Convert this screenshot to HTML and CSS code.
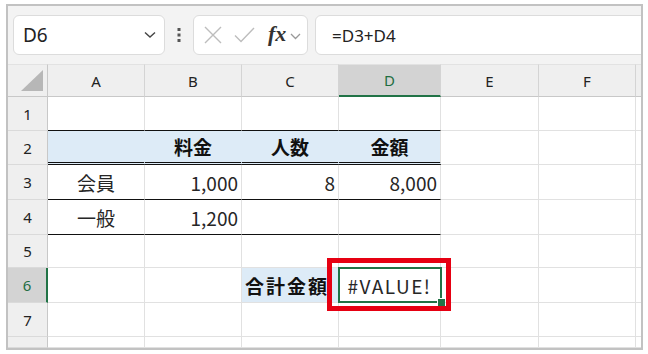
FILE: index.html
```html
<!DOCTYPE html>
<html lang="ja">
<head>
<meta charset="UTF-8">
<meta name="viewport" content="width=device-width, initial-scale=1.0">
<title>#VALUE! エラー</title>
<link rel="stylesheet" href="styles.css">
</head>
<body>
<div class="frame">
    <div class="toolbar">
        <div class="namebox">
            <span>D6</span>
            <svg width="12" height="8" viewBox="0 0 12 8"><path d="M1 1.5 L6 6 L11 1.5" fill="none" stroke="#444" stroke-width="1.4"/></svg>
        </div>
        <div class="dots">
            <svg width="4" height="14" viewBox="0 0 4 14"><rect x="0.5" y="0" width="3" height="3" fill="#555"/><rect x="0.5" y="5.5" width="3" height="3" fill="#555"/><rect x="0.5" y="11" width="3" height="3" fill="#555"/></svg>
        </div>
        <div class="fbuttons">
            <svg class="ic-x" width="18" height="18" viewBox="0 0 18 18"><path d="M1 1 L17 17 M17 1 L1 17" stroke="#bdbdbd" stroke-width="1.4"/></svg>
            <svg class="ic-ok" width="21" height="16" viewBox="0 0 21 16"><path d="M1 8.5 L7 14.5 L20 1" fill="none" stroke="#bdbdbd" stroke-width="1.4"/></svg>
            <span class="fx">fx</span>
            <svg class="ic-more" width="11" height="7" viewBox="0 0 11 7"><path d="M1 1 L5.5 5.5 L10 1" fill="none" stroke="#999" stroke-width="1.3"/></svg>
        </div>
        <div class="formula">=D3+D4</div>
    </div>

    <div class="sheet">
        <!-- column headers -->
        <div class="corner"><svg width="22" height="21" viewBox="0 0 22 21"><polygon points="22,0 22,21 0,21" fill="#b7b7b7"/></svg></div>
        <div class="colhead">A</div>
        <div class="colhead">B</div>
        <div class="colhead">C</div>
        <div class="colhead sel">D</div>
        <div class="colhead">E</div>
        <div class="colhead">F</div>
        <div class="colhead pad"></div>

        <!-- row 1 -->
        <div class="rowhead">1</div>
        <div class="cell under"></div>
        <div class="cell under"></div>
        <div class="cell under"></div>
        <div class="cell under"></div>
        <div class="cell"></div>
        <div class="cell"></div>
        <div class="cell pad"></div>

        <!-- row 2 -->
        <div class="rowhead">2</div>
        <div class="cell head-fill"></div>
        <div class="cell head-fill bold center">料金</div>
        <div class="cell head-fill bold center">人数</div>
        <div class="cell head-fill last bold center">金額</div>
        <div class="cell"></div>
        <div class="cell"></div>
        <div class="cell pad"></div>

        <!-- row 3 -->
        <div class="rowhead">3</div>
        <div class="cell under center">会員</div>
        <div class="cell under right">1,000</div>
        <div class="cell under right">8</div>
        <div class="cell under right">8,000</div>
        <div class="cell"></div>
        <div class="cell"></div>
        <div class="cell pad"></div>

        <!-- row 4 -->
        <div class="rowhead">4</div>
        <div class="cell under center">一般</div>
        <div class="cell under right">1,200</div>
        <div class="cell under"></div>
        <div class="cell under"></div>
        <div class="cell"></div>
        <div class="cell"></div>
        <div class="cell pad"></div>

        <!-- row 5 -->
        <div class="rowhead">5</div>
        <div class="cell"></div>
        <div class="cell"></div>
        <div class="cell"></div>
        <div class="cell"></div>
        <div class="cell"></div>
        <div class="cell"></div>
        <div class="cell pad"></div>

        <!-- row 6 -->
        <div class="rowhead sel">6</div>
        <div class="cell"></div>
        <div class="cell"></div>
        <div class="cell total bold">合計金額</div>
        <div class="cell active center">
            <span class="error">#VALUE!</span>
            <div class="selection"><div class="handle"></div></div>
            <div class="mark"></div>
        </div>
        <div class="cell"></div>
        <div class="cell"></div>
        <div class="cell pad"></div>

        <!-- row 7 -->
        <div class="rowhead">7</div>
        <div class="cell"></div>
        <div class="cell"></div>
        <div class="cell"></div>
        <div class="cell"></div>
        <div class="cell"></div>
        <div class="cell"></div>
        <div class="cell pad"></div>

        <!-- row 8 (cut off) -->
        <div class="rowhead"></div>
        <div class="cell"></div>
        <div class="cell"></div>
        <div class="cell"></div>
        <div class="cell"></div>
        <div class="cell"></div>
        <div class="cell"></div>
        <div class="cell pad"></div>
    </div>
</div>
</body>
</html>
```

FILE: styles.css
```css
body {
    margin: 0;
    padding: 4px 6px;
    background-color: #fff;
    font-family: "Noto Sans", "Noto Sans CJK JP", sans-serif;
}
.frame {
    width: 633px;
    height: 342px;
    border: 2px solid #c2c2c2;
    background-color: #fff;
    overflow: hidden;
    display: flex;
    flex-direction: column;
}

/* formula bar area */
.toolbar {
    height: 58px;
    flex: none;
    box-sizing: border-box;
    padding: 9px 0 0 5px;
    background-color: #f3f3f3;
    display: flex;
    align-items: flex-start;
}
.namebox,
.fbuttons,
.formula {
    height: 40px;
    box-sizing: border-box;
    border: 1px solid #dcdcdc;
    border-radius: 6px;
    background-color: #fff;
    display: flex;
    align-items: center;
}
.namebox {
    width: 152px;
    padding: 0 8px 0 9px;
    justify-content: space-between;
    font-size: 19px;
    color: #222;
}
.dots {
    width: 28px;
    height: 40px;
    display: flex;
    align-items: center;
    justify-content: center;
}
.fbuttons {
    width: 115px;
    padding-left: 10px;
}
.ic-ok {
    margin-left: 12px;
}
.fx {
    margin-left: 13px;
    font-family: "Liberation Serif", "DejaVu Serif", serif;
    font-style: italic;
    font-weight: bold;
    font-size: 22px;
    color: #333;
    line-height: 1;
    padding-bottom: 3px;
}
.ic-more {
    margin-left: 4px;
    margin-top: 3px;
}
.formula {
    flex: 1;
    margin-left: 7px;
    margin-right: -8px;
    padding-left: 16px;
    font-size: 17px;
    color: #222;
}

/* grid */
.sheet {
    flex: 1;
    display: grid;
    grid-template-columns: 40px 97px 97px 97px 102px 98px 97px 5px;
    grid-template-rows: 33px 34px 34px 35px 35px 33px 35px 34px 1fr;
}
.sheet > div {
    box-sizing: border-box;
    display: flex;
    align-items: center;
}
.corner {
    background-color: #efefef;
    border-top: 1px solid #e2e2e2;
    border-right: 1px solid #c8c8c8;
    border-bottom: 1px solid #c8c8c8;
    justify-content: flex-end;
    align-items: flex-end !important;
    padding: 0 4px 5px 0;
}
.colhead {
    background-color: #efefef;
    border-top: 1px solid #e2e2e2;
    border-right: 1px solid #d4d4d4;
    border-bottom: 1px solid #c8c8c8;
    justify-content: center;
    font-size: 15px;
    color: #222;
}
.colhead.sel {
    background-color: #d3d3d3;
    border-bottom: 2px solid #217346;
    color: #1f6e42;
}
.colhead.pad {
    border-right: none;
}
.rowhead {
    background-color: #efefef;
    border-right: 1px solid #c8c8c8;
    border-bottom: 1px solid #dadada;
    justify-content: center;
    font-size: 15px;
    color: #222;
}
.rowhead.sel {
    background-color: #d3d3d3;
    border-right: 2px solid #217346;
    color: #1f6e42;
}
.cell {
    border-right: 1px solid #e1e1e1;
    border-bottom: 1px solid #e1e1e1;
    padding: 0 3px;
    font-family: "Noto Sans CJK JP", sans-serif;
    font-size: 19px;
    color: #262626;
}
.cell.pad {
    border-right: none;
}
.center {
    justify-content: center;
}
.right {
    justify-content: flex-end;
}
.bold {
    font-weight: bold;
    color: #111;
}
.under {
    border-bottom-color: #111;
}
.head-fill {
    background-color: #ddebf7;
    border-right-color: #ddebf7;
    border-bottom: 3px double #111;
}
.head-fill.last {
    border-right-color: #e1e1e1;
}
.total {
    background-color: #ddebf7;
    border-right-color: #ddebf7;
    white-space: nowrap;
    letter-spacing: 2px;
}

/* active cell and the red mark around it */
.active {
    position: relative;
}
.error {
    letter-spacing: 1.5px;
}
.selection {
    position: absolute;
    left: -1px;
    top: -1px;
    right: -2px;
    bottom: -1px;
    border: 2px solid #217346;
}
.handle {
    position: absolute;
    right: -5px;
    bottom: -5px;
    width: 7px;
    height: 7px;
    background-color: #217346;
    border-left: 1px solid #fff;
    border-top: 1px solid #fff;
}
.mark {
    position: absolute;
    left: -12px;
    top: -10px;
    right: -11px;
    bottom: -9px;
    border: 5px solid #e60012;
}
```
